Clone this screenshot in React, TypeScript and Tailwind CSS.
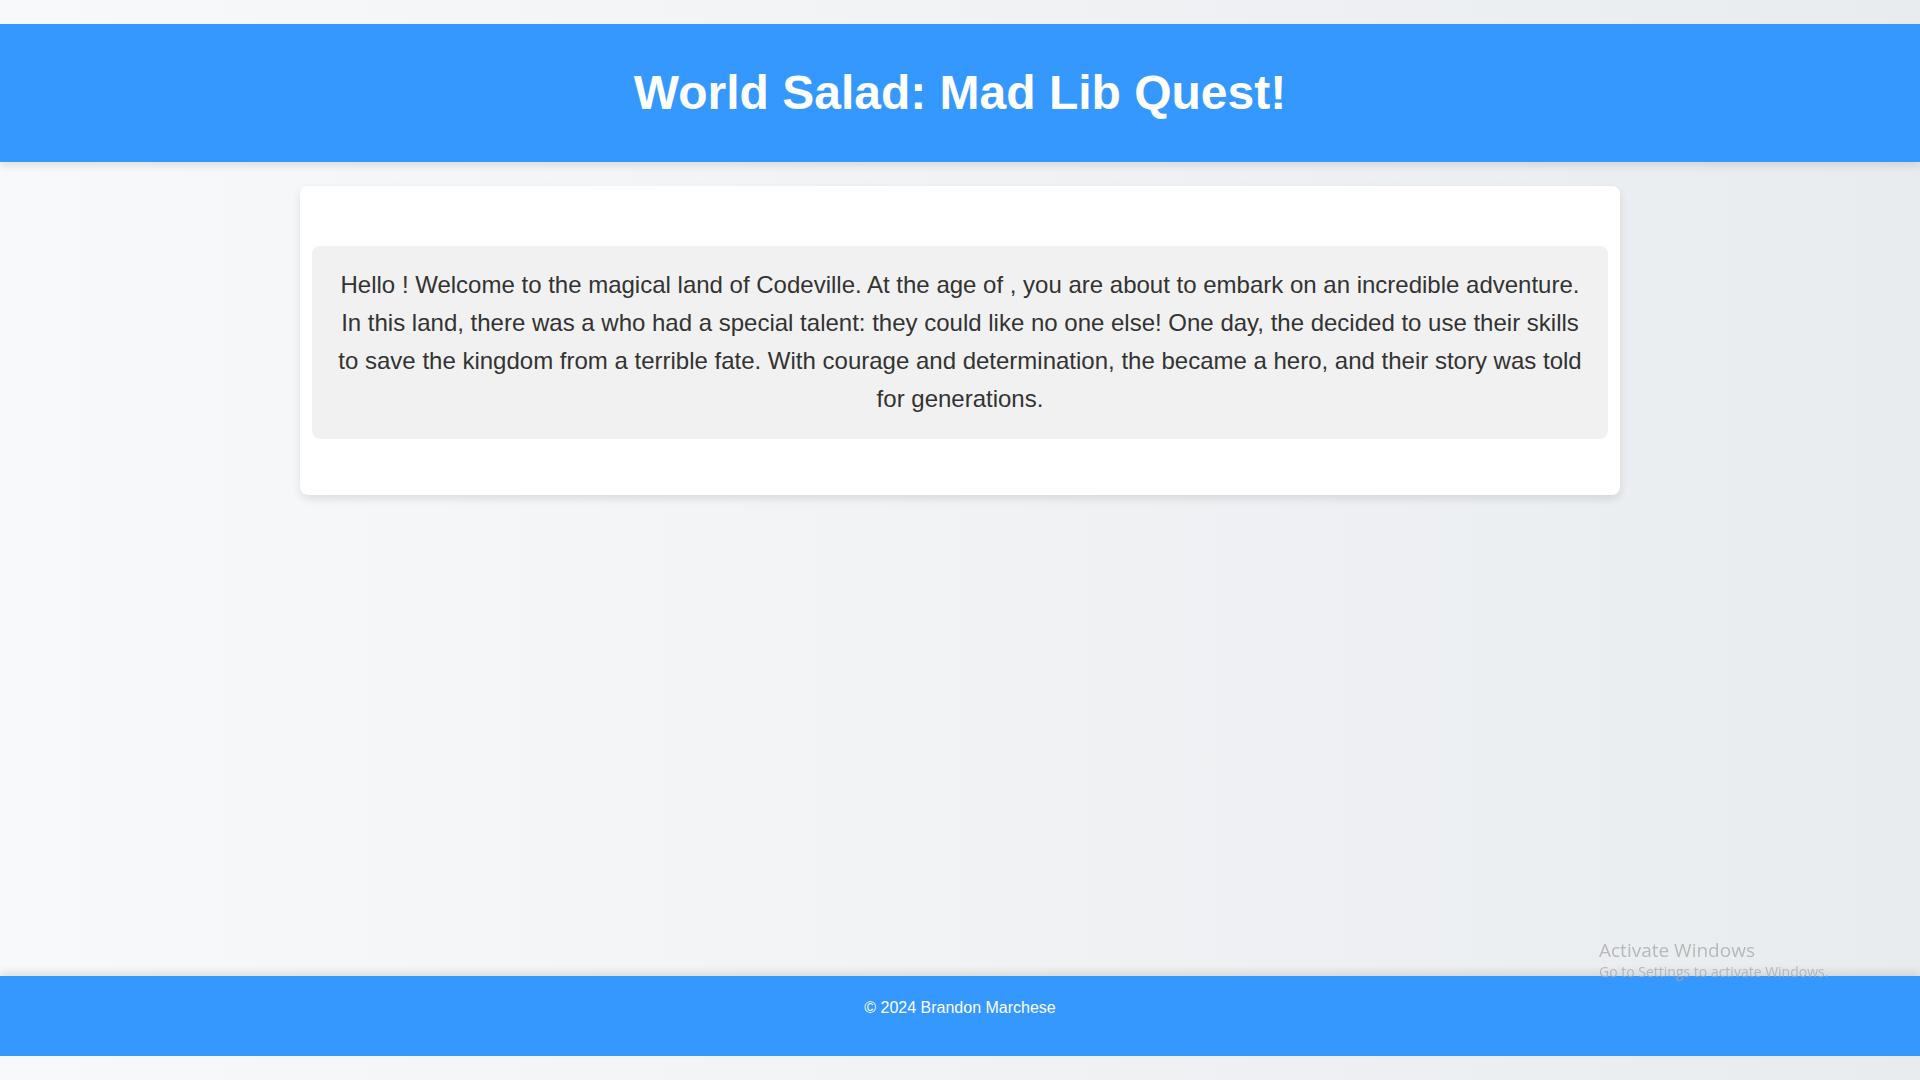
export default function App() {
  return (
    <div className="flex min-h-screen flex-col bg-linear-to-r/srgb from-[#f8f9fa] to-[#e9ecef] py-6 font-['Liberation_Sans',Arial,sans-serif] text-[#333]">
      <header className="bg-[#3498ff] px-6 py-8 text-center text-white shadow-[0_4px_8px_rgba(0,0,0,0.1)]">
        <h1 className="text-5xl leading-[74px] font-bold">World Salad: Mad Lib Quest!</h1>
      </header>
      <main className="mx-auto mt-6 w-full max-w-[1320px] rounded-lg bg-white px-3 pt-[60px] pb-14 shadow-[0_4px_8px_rgba(0,0,0,0.1)]">
        <p className="rounded-lg bg-[#f1f1f1] px-6 pt-5 pb-[21px] text-center text-2xl leading-[38px]">
          Hello ! Welcome to the magical land of Codeville. At the age of , you are about to embark on an incredible adventure. In this land, there was a who had a special talent: they could like no one else! One day, the decided to use their skills to save the kingdom from a terrible fate. With courage and determination, the became a hero, and their story was told for generations.
        </p>
      </main>
      <footer className="relative mt-auto bg-[#3498ff] px-6 pt-5 pb-9 text-center text-base text-white shadow-[0_-4px_8px_rgba(0,0,0,0.1)]">
        <p>© 2024 Brandon Marchese</p>
      </footer>
      <aside className="pointer-events-none fixed right-[85px] bottom-[98px] w-[236px] font-['Open_Sans',sans-serif] whitespace-nowrap text-[#aaa]/80">
        <p className="text-[19px] leading-6">Activate Windows</p>
        <p className="text-sm leading-5">Go to Settings to activate Windows.</p>
      </aside>
    </div>
  );
}
